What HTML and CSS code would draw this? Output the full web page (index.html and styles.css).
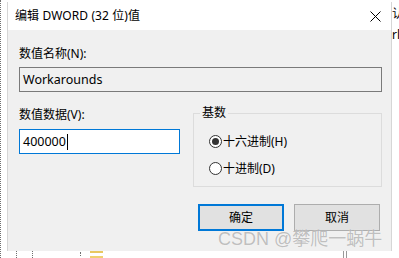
FILE: index.html
```html
<!DOCTYPE html>
<html lang="zh-CN">
<head>
<meta charset="utf-8">
<title>编辑 DWORD (32 位)值</title>
<link rel="stylesheet" href="styles.css">
</head>
<body>
<div class="screen">
  <div class="left-strip"></div>
  <div class="main">
    <div class="dialog">
      <div class="titlebar">
        <span class="title">编辑 DWORD (32 位)值</span>
        <span class="close">
          <svg width="11" height="11" viewBox="0 0 11 11"><path d="M0.5 0.5 L10.5 10.5 M10.5 0.5 L0.5 10.5" stroke="#000" stroke-width="1" fill="none"/></svg>
        </span>
      </div>
      <div class="body">
        <div class="label">数值名称(N):</div>
        <div class="field readonly">Workarounds</div>
        <div class="lower">
          <div class="data-col">
            <div class="label label2">数值数据(V):</div>
            <div class="field active">400000<span class="caret"></span></div>
          </div>
          <fieldset class="group">
            <legend>基数</legend>
            <div class="radios">
              <div class="radio-row"><span class="radio checked"></span><span>十六进制(H)</span></div>
              <div class="radio-row"><span class="radio"></span><span>十进制(D)</span></div>
            </div>
          </fieldset>
        </div>
        <div class="buttons">
          <div class="btn default">确定</div>
          <div class="btn">取消</div>
        </div>
      </div>
    </div>
    <div class="below">
      <span class="mark m1"></span>
      <span class="mark m2"></span>
      <span class="mark m3"></span>
      <span class="folder"></span>
      <span class="mark2"></span>
    </div>
  </div>
  <div class="right-strip">
    <div>认</div>
    <div>rl</div>
  </div>
</div>
<div class="watermark">CSDN @攀爬一蜗牛</div>
</body>
</html>
```
FILE: styles.css
```css
* { box-sizing: border-box; }
html, body { margin: 0; padding: 0; background: #fff; }
body {
  font-family: "Noto Sans", "Noto Sans CJK SC", sans-serif;
  font-size: 12px;
  line-height: 16px;
  color: #000;
  width: 399px;
  height: 258px;
  overflow: hidden;
  position: relative;
}
.screen { display: flex; width: 399px; height: 258px; }
.left-strip { width: 7px; height: 258px; border-left: 1px dotted #6f6f6f; flex: none; }
.main { width: 385px; display: flex; flex-direction: column; flex: none; }
.dialog {
  margin-top: 2px;
  height: 249px;
  display: flex;
  flex-direction: column;
  border-left: 1px solid #d6d6d6;
  border-right: 1px solid #d6d6d6;
}
.titlebar {
  height: 28px;
  background: #fff;
  display: flex;
  align-items: center;
  justify-content: space-between;
  padding-left: 7px;
}
.title { letter-spacing: 0.1px; }
.close { width: 32px; height: 28px; display: flex; align-items: center; justify-content: center; }
.close svg { display: block; margin-top: 0px; }
.body {
  flex: 1;
  background: #f0f0f0;
  padding: 16px 9px 0 11px;
  display: flex;
  flex-direction: column;
}
.label { height: 16px; }
.field {
  height: 25px;
  margin-top: 5px;
  border: 1px solid #7a7a7a;
  padding-left: 3px;
  display: flex;
  align-items: center;
  font-size: 12.5px;
}
.field.readonly { background: #f0f0f0; }
.field.active { background: #fff; border-color: #0078d7; margin-top: 6px; }
.caret { display: inline-block; width: 1px; height: 16px; background: #000; margin-left: 1px; }
.lower { display: flex; margin-top: 13px; gap: 13px; }
.data-col { width: 161px; flex: none; }
.label2 { margin-top: 2px; }
.group {
  flex: 1;
  margin: 0;
  border: 1px solid #dcdcdc;
  padding: 7px 0 4px 6px;
  min-width: 0;
}
.group legend { padding: 0 2px; margin: 0; line-height: 16px; }
.radios { padding-left: 9px; }
.radio-row { height: 27px; display: flex; align-items: center; gap: 1px; }
.radio {
  width: 13px; height: 13px; border-radius: 50%;
  border: 1px solid #333; background: #fff;
  display: inline-flex; align-items: center; justify-content: center;
  flex: none;
}
.radio.checked::after {
  content: ""; width: 7px; height: 7px; border-radius: 50%; background: #333;
}
.buttons {
  display: flex;
  justify-content: flex-end;
  gap: 10px;
  margin-top: 17px;
  padding-right: 2px;
}
.btn {
  width: 86px; height: 27px;
  background: #e1e1e1;
  border: 1px solid #adadad;
  display: flex; align-items: center; justify-content: center;
}
.btn.default { border: 2px solid #0078d7; }
.below { height: 7px; display: flex; align-items: flex-start; position: relative; }
.mark { width: 1px; height: 7px; border-left: 1px dotted #6f6f6f; flex: none; }
.m1 { margin-left: 9px; }
.m2 { margin-left: 15px; }
.m3 { margin-left: 47px; height: 4px; margin-top: 1px; }
.folder { width: 13px; height: 7px; margin-left: 9px; border-top: 2px solid #e8c860; border-bottom: 2px solid #f0d070; background: #fff; flex: none; }
.mark2 { width: 4px; height: 7px; margin-left: 240px; border-left: 1px solid #999; border-right: 1px solid #999; flex: none; }
.right-strip { width: 7px; overflow: hidden; flex: none; padding-top: 3px; line-height: 21px; white-space: nowrap; font-family: "Noto Sans", "Noto Sans CJK SC", sans-serif; }
.watermark {
  position: absolute;
  left: 218px;
  top: 228px;
  font-family: "Liberation Sans", "Noto Sans CJK SC", sans-serif;
  font-size: 18px;
  line-height: 22px;
  color: rgba(140, 140, 140, 0.55);
  text-shadow: 0 0 1px rgba(255,255,255,0.8);
  white-space: nowrap;
}
```
